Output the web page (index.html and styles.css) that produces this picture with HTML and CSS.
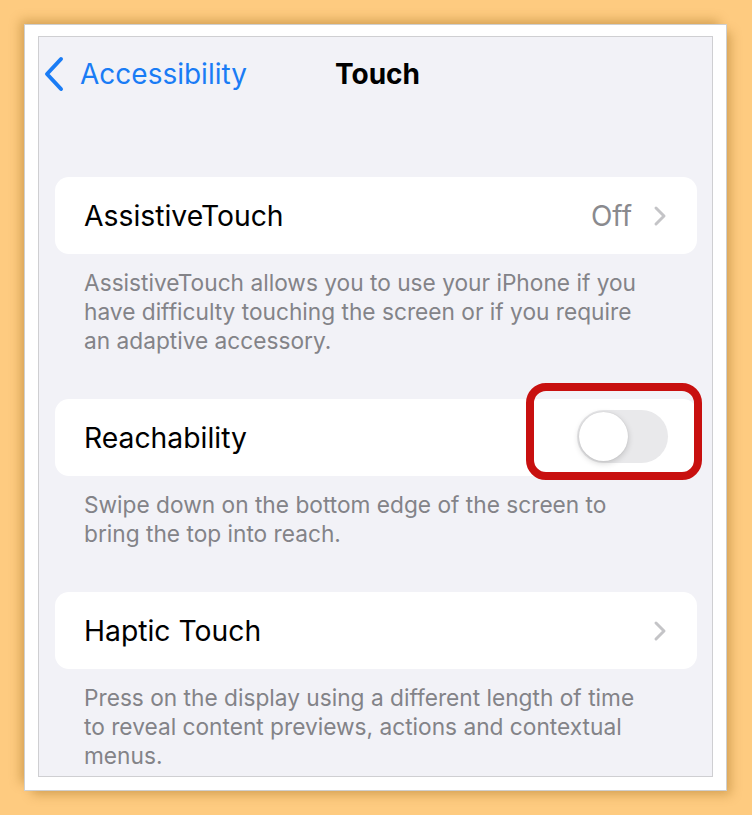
FILE: index.html
```html
<!DOCTYPE html>
<html>
<head>
<meta charset="utf-8">
<link rel="stylesheet" href="styles.css">
</head>
<body>
<div class="frame">
  <div class="screen">
    <div class="nav">
      <div class="back">
        <svg class="back-chevron" width="22" height="36" viewBox="0 0 22 36"><path d="M18 3 L4 18 L18 33" fill="none" stroke="#1a7cf5" stroke-width="4" stroke-linecap="round" stroke-linejoin="round"/></svg>
        <span class="back-label">Accessibility</span>
      </div>
      <div class="title">Touch</div>
      <div class="nav-spacer"></div>
    </div>

    <div class="group first">
      <div class="cell">
        <span class="label">AssistiveTouch</span>
        <span class="detail">Off</span>
        <svg class="chev" width="14" height="22" viewBox="0 0 14 22"><path d="M3 3 L11 11 L3 19" fill="none" stroke="#c4c4c7" stroke-width="3" stroke-linecap="round" stroke-linejoin="round"/></svg>
      </div>
      <p class="footnote">AssistiveTouch allows you to use your iPhone if you<br>have difficulty touching the screen or if you require<br>an adaptive accessory.</p>
    </div>

    <div class="group">
      <div class="cell">
        <span class="label">Reachability</span>
        <div class="toggle">
          <div class="knob"></div>
          <div class="highlight"></div>
        </div>
      </div>
      <p class="footnote">Swipe down on the bottom edge of the screen to<br>bring the top into reach.</p>
    </div>

    <div class="group">
      <div class="cell">
        <span class="label">Haptic Touch</span>
        <svg class="chev" width="14" height="22" viewBox="0 0 14 22"><path d="M3 3 L11 11 L3 19" fill="none" stroke="#c4c4c7" stroke-width="3" stroke-linecap="round" stroke-linejoin="round"/></svg>
      </div>
      <p class="footnote">Press on the display using a different length of time<br>to reveal content previews, actions and contextual<br>menus.</p>
    </div>
  </div>
</div>
</body>
</html>
```

FILE: styles.css
```css
html, body {
  margin: 0;
  padding: 0;
}
body {
  background: #fecb80;
  width: 752px;
  height: 815px;
  overflow: hidden;
  font-family: Inter, "Liberation Sans", sans-serif;
}
.frame {
  position: relative;
  margin: 24px 0 0 24px;
  width: 675px;
  height: 741px;
  padding: 11px 13px 13px 13px;
  background: #ffffff;
  border: 1px solid #cfcfcf;
  box-sizing: content-box;
  box-shadow: -6px -6px 10px -2px rgba(170, 120, 40, 0.45), 6px 6px 10px -2px rgba(170, 120, 40, 0.45);
}
.screen {
  width: 673px;
  height: 739px;
  border: 1px solid #cfcfd2;
  background: #f2f2f7;
  overflow: hidden;
  box-sizing: content-box;
}
.nav {
  display: grid;
  grid-template-columns: 1fr auto 1fr;
  align-items: center;
  height: 74px;
  padding-left: 4px;
}
.back {
  display: flex;
  align-items: center;
  color: #1a7cf5;
  font-size: 28px;
}
.back-chevron {
  display: block;
  margin-right: 15px;
}
.title {
  font-weight: 700;
  font-size: 28px;
  color: #000;
}
.group {
  margin: 0 15px 0 16px;
}
.group.first {
  margin-top: 66px;
}
.cell {
  display: flex;
  align-items: center;
  height: 77px;
  background: #ffffff;
  border-radius: 14px;
  padding: 0 30px 0 29px;
}
.label {
  flex: 1;
  font-size: 28.3px;
  color: #000;
}
.detail {
  font-size: 28px;
  color: #8a8a8e;
  margin-right: 21px;
}
.chev {
  display: block;
}
.footnote {
  margin: 14px 0 44px 0;
  padding-left: 29px;
  font-size: 22.7px;
  line-height: 29px;
  color: #838388;
}
.toggle {
  position: relative;
  width: 91px;
  height: 53px;
  border-radius: 27px;
  background: #e9e9eb;
  margin-right: -1px;
  margin-top: -2px;
}
.knob {
  position: absolute;
  left: 2px;
  top: 2px;
  width: 49px;
  height: 49px;
  border-radius: 50%;
  background: #ffffff;
  box-shadow: 0 2px 6px rgba(0, 0, 0, 0.18), 0 0 1px rgba(0, 0, 0, 0.15);
}
.highlight {
  position: absolute;
  left: -51px;
  top: -27px;
  right: -34px;
  bottom: -17px;
  border: 8px solid #c8100f;
  border-radius: 20px;
}
```
